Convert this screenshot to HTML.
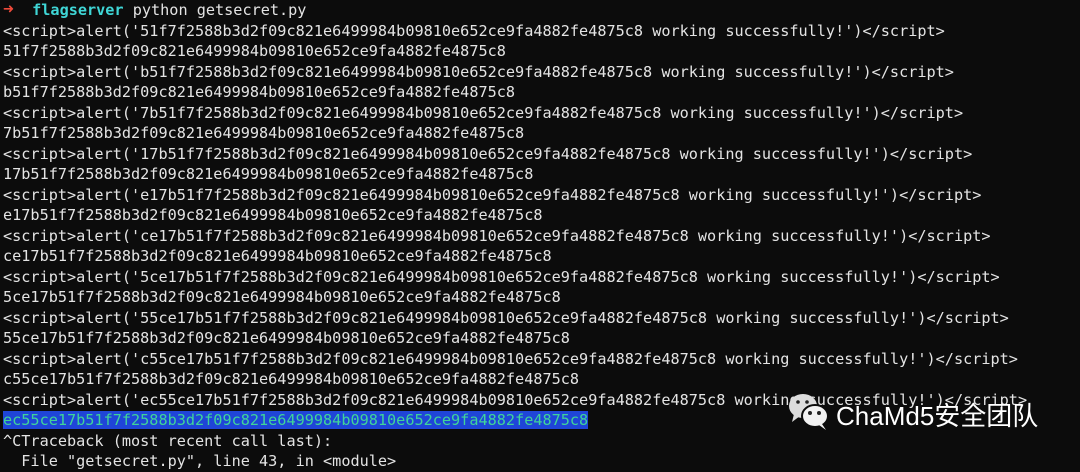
<html><head><style>
body{margin:0;width:1080px;height:461px;background:#0c0c0c;overflow:hidden;position:relative}
pre{margin:0;position:absolute;left:3px;top:0;font-family:"DejaVu Sans Mono","Liberation Mono",monospace;font-size:15.2px;line-height:20.5px;color:#e4e4e4}
.hl{background:#1f45d8;color:#3fd49a}
.r{color:#ee4a3a;font-weight:bold;font-size:18px;line-height:10px}.c{color:#3fd6d6;font-weight:bold}
.wm{position:absolute;left:836px;top:396px;font-family:"Liberation Sans","Noto Sans CJK SC",sans-serif;font-size:26px;color:#fff}
</style></head><body>
<pre><span class="r">➜</span>  <span class="c">flagserver</span> python getsecret.py
&lt;script&gt;alert('51f7f2588b3d2f09c821e6499984b09810e652ce9fa4882fe4875c8 working successfully!')&lt;/script&gt;
51f7f2588b3d2f09c821e6499984b09810e652ce9fa4882fe4875c8
&lt;script&gt;alert('b51f7f2588b3d2f09c821e6499984b09810e652ce9fa4882fe4875c8 working successfully!')&lt;/script&gt;
b51f7f2588b3d2f09c821e6499984b09810e652ce9fa4882fe4875c8
&lt;script&gt;alert('7b51f7f2588b3d2f09c821e6499984b09810e652ce9fa4882fe4875c8 working successfully!')&lt;/script&gt;
7b51f7f2588b3d2f09c821e6499984b09810e652ce9fa4882fe4875c8
&lt;script&gt;alert('17b51f7f2588b3d2f09c821e6499984b09810e652ce9fa4882fe4875c8 working successfully!')&lt;/script&gt;
17b51f7f2588b3d2f09c821e6499984b09810e652ce9fa4882fe4875c8
&lt;script&gt;alert('e17b51f7f2588b3d2f09c821e6499984b09810e652ce9fa4882fe4875c8 working successfully!')&lt;/script&gt;
e17b51f7f2588b3d2f09c821e6499984b09810e652ce9fa4882fe4875c8
&lt;script&gt;alert('ce17b51f7f2588b3d2f09c821e6499984b09810e652ce9fa4882fe4875c8 working successfully!')&lt;/script&gt;
ce17b51f7f2588b3d2f09c821e6499984b09810e652ce9fa4882fe4875c8
&lt;script&gt;alert('5ce17b51f7f2588b3d2f09c821e6499984b09810e652ce9fa4882fe4875c8 working successfully!')&lt;/script&gt;
5ce17b51f7f2588b3d2f09c821e6499984b09810e652ce9fa4882fe4875c8
&lt;script&gt;alert('55ce17b51f7f2588b3d2f09c821e6499984b09810e652ce9fa4882fe4875c8 working successfully!')&lt;/script&gt;
55ce17b51f7f2588b3d2f09c821e6499984b09810e652ce9fa4882fe4875c8
&lt;script&gt;alert('c55ce17b51f7f2588b3d2f09c821e6499984b09810e652ce9fa4882fe4875c8 working successfully!')&lt;/script&gt;
c55ce17b51f7f2588b3d2f09c821e6499984b09810e652ce9fa4882fe4875c8
&lt;script&gt;alert('ec55ce17b51f7f2588b3d2f09c821e6499984b09810e652ce9fa4882fe4875c8 working successfully!')&lt;/script&gt;
<span class="hl">ec55ce17b51f7f2588b3d2f09c821e6499984b09810e652ce9fa4882fe4875c8</span>
^CTraceback (most recent call last):
  File "getsecret.py", line 43, in &lt;module&gt;</pre>
<svg style="position:absolute;left:786px;top:392px" width="48" height="40" viewBox="0 0 48 40">
<ellipse cx="17" cy="14" rx="14" ry="12" fill="#ddd"/><path d="M8 22 L6 30 L14 24Z" fill="#ddd"/>
<ellipse cx="29" cy="24" rx="13" ry="11" fill="#f2f2f2" stroke="#0c0c0c" stroke-width="2"/><path d="M36 32 L40 38 L33 33Z" fill="#f2f2f2"/>
<circle cx="12" cy="10" r="1.8" fill="#222"/><circle cx="21" cy="10" r="1.8" fill="#222"/>
<circle cx="24" cy="21" r="2" fill="#222"/><circle cx="33" cy="21" r="2" fill="#222"/>
</svg>
<div class="wm">ChaMd5安全团队</div>
</body></html>
